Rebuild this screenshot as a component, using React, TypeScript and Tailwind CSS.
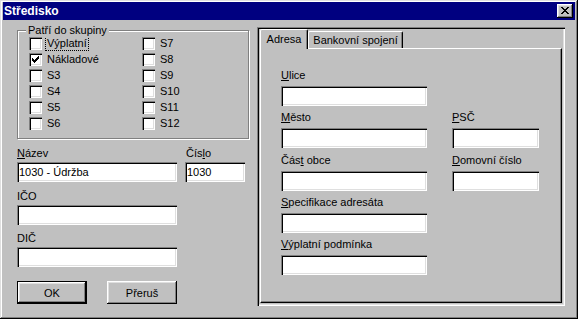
import React from "react";

const sunken =
  "bg-white shadow-[inset_1px_1px_0_#808080,inset_2px_2px_0_#000,inset_-1px_-1px_0_#fff,inset_-2px_-2px_0_#dfdfdf]";
const raised =
  "bg-[#c0c0c0] shadow-[inset_-1px_-1px_0_#000,inset_1px_1px_0_#fff,inset_-2px_-2px_0_#808080,inset_2px_2px_0_#dfdfdf]";

function Lbl({ text, u }: { text: string; u?: number }) {
  if (u === undefined) return <span>{text}</span>;
  return (
    <span>
      {text.slice(0, u)}
      <span className="underline">{text[u]}</span>
      {text.slice(u + 1)}
    </span>
  );
}

function Input({ w, value }: { w: string; value?: string }) {
  return (
    <div className={`${w} h-[20px] ${sunken} flex items-center pl-[2px] whitespace-nowrap`}>
      {value}
    </div>
  );
}

function Check({ label, checked, focus }: { label: string; checked?: boolean; focus?: boolean }) {
  return (
    <div className="flex items-center h-[13px] mb-[3px]">
      <div className={`w-[13px] h-[13px] ${sunken} flex items-center justify-center shrink-0`}>
        {checked && (
          <svg width="7" height="7" viewBox="0 0 7 7" shapeRendering="crispEdges">
            <path
              d="M6 0h1v1H6z M5 1h2v1H5z M0 2h1v1H0z M4 2h3v1H4z M0 3h2v1H0z M3 3h3v1H3z M0 4h5v1H0z M1 5h3v1H1z M2 6h1v1H2z"
              fill="#000"
            />
          </svg>
        )}
      </div>
      <span
        className={
          focus
            ? "ml-[4px] px-[1px] leading-[13px] outline outline-1 outline-dotted outline-black"
            : "ml-[5px] leading-[13px]"
        }
      >
        {label}
      </span>
    </div>
  );
}

function Field({ label, u, w, value }: { label: string; u?: number; w: string; value?: string }) {
  return (
    <div className="flex flex-col">
      <div className="h-[14px] whitespace-nowrap">
        <Lbl text={label} u={u} />
      </div>
      <div className="mt-[4px]">
        <Input w={w} value={value} />
      </div>
    </div>
  );
}

export default function App() {
  return (
    <div
      className={`w-[578px] h-[319px] bg-[#c0c0c0] font-['Liberation_Sans',Arial,sans-serif] text-[11px] leading-[14px] text-black pt-[2px] px-[3px] shadow-[inset_-1px_-1px_0_#000,inset_1px_1px_0_#dfdfdf,inset_-2px_-2px_0_#808080,inset_2px_2px_0_#fff] overflow-hidden`}
    >
      {/* Title bar */}
      <div className="h-[18px] bg-[#000080] flex items-center justify-between pl-[1px] pr-[2px]">
        <span className="text-white font-bold text-[12px] leading-[16px]">Středisko</span>
        <div className={`w-[16px] h-[14px] ${raised} flex items-center justify-center`}>
          <svg width="8" height="7" viewBox="0 0 8 7" shapeRendering="crispEdges" className="-mt-[1px] -ml-[1px]">
            <path
              d="M0 0h2v1H0z M6 0h2v1H6z M1 1h2v1H1z M5 1h2v1H5z M2 2h4v1H2z M3 3h2v1H3z M2 4h4v1H2z M1 5h2v1H1z M5 5h2v1H5z M0 6h2v1H0z M6 6h2v1H6z"
              fill="#000"
            />
          </svg>
        </div>
      </div>

      <div className="flex">
        {/* Left column */}
        <div className="ml-[14px] mt-[10px] w-[233px] flex flex-col">
          <div className="relative w-[232px] h-[109px] border border-[#808080] shadow-[inset_1px_1px_0_#fff,1px_1px_0_#fff] pt-[6px] pl-[11px] flex">
            <span className="absolute -top-[8px] left-[8px] px-[2px] bg-[#c0c0c0] leading-[14px]">
              Patří do skupiny
            </span>
            <div className="w-[113px] flex flex-col">
              <Check label="Výplatní" focus />
              <Check label="Nákladové" checked />
              <Check label="S3" />
              <Check label="S4" />
              <Check label="S5" />
              <Check label="S6" />
            </div>
            <div className="flex flex-col">
              <Check label="S7" />
              <Check label="S8" />
              <Check label="S9" />
              <Check label="S10" />
              <Check label="S11" />
              <Check label="S12" />
            </div>
          </div>

          <div className="flex mt-[7px]">
            <div className="w-[160px] flex flex-col">
              <div className="h-[14px]">
                <Lbl text="Název" u={0} />
              </div>
              <div className="mt-[2px]">
                <Input w="w-[160px]" value="1030 - Údržba" />
              </div>
            </div>
            <div className="ml-[8px] w-[60px] flex flex-col">
              <div className="h-[14px] pl-[1px]">
                <Lbl text="Číslo" u={3} />
              </div>
              <div className="mt-[2px]">
                <Input w="w-[60px]" value="1030" />
              </div>
            </div>
          </div>

          <div className="mt-[7px] h-[14px]">IČO</div>
          <div className="mt-[2px]">
            <Input w="w-[160px]" />
          </div>

          <div className="mt-[6px] h-[14px]">DIČ</div>
          <div className="mt-[2px]">
            <Input w="w-[160px]" />
          </div>

          <div className="mt-[14px] flex">
            <div className="w-[70px] h-[23px] border border-black">
              <div className={`w-full h-full ${raised} flex items-center justify-center`}>OK</div>
            </div>
            <div className={`ml-[20px] w-[70px] h-[23px] ${raised} flex items-center justify-center`}>
              Přeruš
            </div>
          </div>
        </div>

        {/* Right: tab control */}
        <div className="ml-[7px] mt-[7px] w-[308px] h-[279px] shadow-[inset_1px_1px_0_#808080,inset_2px_2px_0_#000,inset_-1px_-1px_0_#fff,inset_-2px_-2px_0_#dfdfdf] p-[2px] flex flex-col">
          <div className="h-[19px] flex items-end pl-[1px]">
            <div className="relative z-10 h-[20px] -mb-[1px] w-[48px] bg-[#c0c0c0] border-l border-t border-r border-l-white border-t-white border-r-black rounded-t-[2px] shadow-[inset_-1px_0_0_#808080] pt-[2px] text-center">
              Adresa
            </div>
            <div className="h-[17px] w-[95px] bg-[#c0c0c0] border-l border-t border-r border-l-white border-t-white border-r-black rounded-t-[2px] shadow-[inset_-1px_0_0_#808080] pt-[1px] text-center whitespace-nowrap">
              Bankovní spojení
            </div>
          </div>
          <div className="ml-[1px] w-[302px] h-[255px] border border-white border-r-black border-b-black shadow-[inset_-1px_-1px_0_#808080] pt-[19px] pl-[20px] flex flex-col">
            <Field label="Ulice" u={0} w="w-[146px]" />
            <div className="flex mt-[4px]">
              <Field label="Město" u={0} w="w-[146px]" />
              <div className="ml-[25px]">
                <Field label="PSČ" u={0} w="w-[87px]" />
              </div>
            </div>
            <div className="flex mt-[5px]">
              <Field label="Část obce" u={3} w="w-[146px]" />
              <div className="ml-[25px]">
                <Field label="Domovní číslo" u={0} w="w-[87px]" />
              </div>
            </div>
            <div className="mt-[4px]">
              <Field label="Specifikace adresáta" u={0} w="w-[146px]" />
            </div>
            <div className="mt-[4px]">
              <Field label="Výplatní podmínka" u={0} w="w-[146px]" />
            </div>
          </div>
        </div>
      </div>
    </div>
  );
}
